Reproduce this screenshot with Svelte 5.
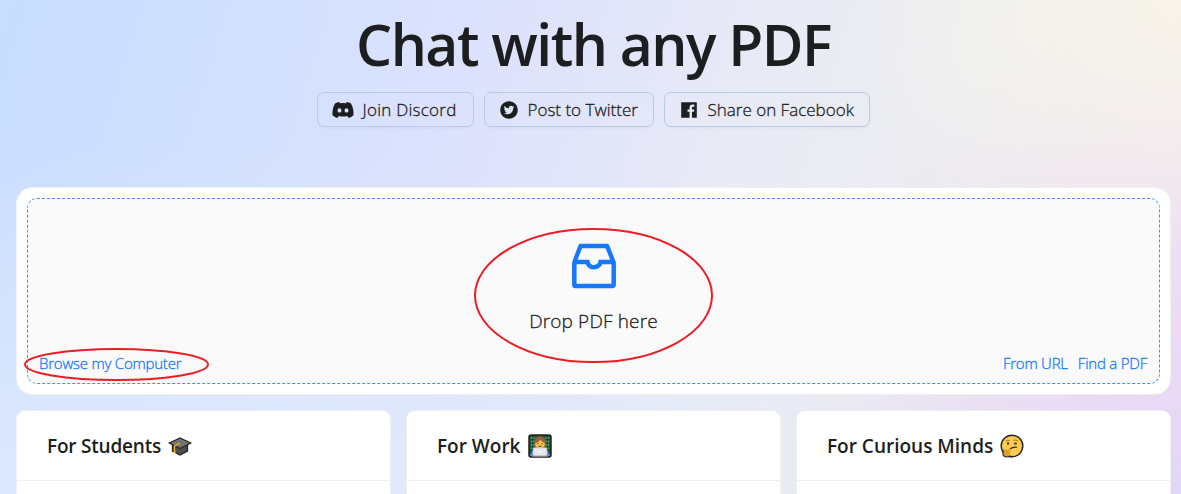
<script lang="ts">
	interface ShareLink {
		id: string;
		label: string;
		viewBox: string;
		path: string;
	}

	const shareLinks: ShareLink[] = [
		{
			id: 'discord',
			label: 'Join Discord',
			viewBox: '0 0 22 22',
			path: 'M7.2 3 8 4.2Q11 3.7 14 4.2L14.8 3Q17 3.2 19 4.6C21 8 21.8 12 21.5 16.2Q19.2 18.5 16.5 19L15.3 17Q11 18.2 6.7 17L5.5 19Q2.8 18.5.5 16.2C.2 12 1 8 3 4.6Q5 3.2 7.2 3ZM7.5 9.2a2 2.2 0 1 0 .01 4.4a2 2.2 0 0 0-.01-4.4ZM14.5 9.2a2 2.2 0 1 0 .01 4.4a2 2.2 0 0 0-.01-4.4Z'
		},
		{
			id: 'twitter',
			label: 'Post to Twitter',
			viewBox: '0 0 1024 1024',
			path: 'M512 64C264.6 64 64 264.6 64 512s200.6 448 448 448 448-200.6 448-448S759.4 64 512 64zm215.3 337.7c.3 4.7.3 9.6.3 14.4 0 146.8-111.8 315.9-316.1 315.9-63 0-121.4-18.3-170.6-49.8 9 1 17.6 1.4 26.8 1.4 52 0 99.8-17.6 137.9-47.4-48.8-1-89.8-33-103.8-77 17.1 2.5 32.5 2.5 50.1-2a111 111 0 01-88.9-109v-1.4c14.7 8.3 32 13.4 50.1 14.1a111.13 111.13 0 01-49.5-92.4c0-20.7 5.4-39.6 15.1-56a315.28 315.28 0 00229 116.1C492 353.1 548.4 292 616.2 292c32 0 60.8 13.4 81.1 35 25.1-4.7 49.1-14.1 70.5-26.7-8.3 25.7-25.7 47.4-48.8 61.1 22.4-2.4 44-8.6 64-17.3-15.1 22.2-34 41.9-55.7 57.6z'
		},
		{
			id: 'facebook',
			label: 'Share on Facebook',
			viewBox: '0 0 1024 1024',
			path: 'M880 112H144c-17.7 0-32 14.3-32 32v736c0 17.7 14.3 32 32 32h736c17.7 0 32-14.3 32-32V144c0-17.7-14.3-32-32-32zm-92.4 233.5h-63.9c-50.1 0-59.8 23.8-59.8 58.8v77.1h119.6l-15.6 120.7h-104V912H539.2V602.2H434.9V481.4h104.3v-89c0-103.3 63.1-159.6 155.3-159.6 44.2 0 82.1 3.3 93.2 4.8v107.9z'
		}
	];

	const audiences = [
		{ id: 'students', title: 'For Students' },
		{ id: 'work', title: 'For Work' },
		{ id: 'curious', title: 'For Curious Minds' }
	];
</script>

<div class="page">
	<h1>Chat with any PDF</h1>

	<div class="share-row">
		{#each shareLinks as link}
			<button class="share-btn {link.id}">
				<svg viewBox={link.viewBox} fill="currentColor" fill-rule="evenodd">
					<path d={link.path} />
				</svg>
				<span>{link.label}</span>
			</button>
		{/each}
	</div>

	<div class="upload-card">
		<div class="dropzone">
			<svg class="inbox" viewBox="0 0 1024 1024" fill="#1677ff">
				<path d="M885.2 446.3l-.2-.8-112.2-285.1c-5-16.1-19.9-27.2-36.8-27.2H281.2c-17 0-32.1 11.3-36.9 27.6L139.4 443l-.3.7-.2.8c-1.3 4.9-1.7 9.9-1 14.8-.1 1.6-.2 3.2-.2 4.8V830a60.9 60.9 0 0060.8 60.8h627.2c33.5 0 60.8-27.3 60.9-60.8V464.1c0-1.3 0-2.6-.1-3.7.4-4.9 0-9.6-1.3-14.1zm-295.8-43l-.3 15.7c-.8 44.9-31.8 75.1-77.1 75.1-22.1 0-41.1-7.1-54.8-20.6S436 441.2 435.6 419l-.3-15.7H229.5L309 210h399.2l81.7 193.3H589.4zm-375 76.8h157.3c24.3 57.1 76 90.8 140.4 90.8 33.7 0 65-9.4 90.3-27.2 22.2-15.6 39.5-37.4 50.7-63.6h156.5V814H214.4V480.1z" />
			</svg>
			<div class="drop-text"><span>Drop PDF here</span></div>
			<div class="links">
				<a href="#browse" class="browse">Browse my Computer</a>
				<div class="links-right">
					<a href="#url" class="url">From URL</a>
					<a href="#find" class="find">Find a PDF</a>
				</div>
			</div>
		</div>
	</div>

	<div class="cards">
		{#each audiences as item}
			<div class="card">
				<div class="card-head">
					<span class="card-title {item.id}">{item.title}</span>
					{#if item.id === 'students'}
						<svg class="emoji" viewBox="0 0 24 24">
							<path d="M4.5 11v6l7.500 4 7.500-4v-6" fill="#4d4e52" stroke="#242424" stroke-width="1.3" />
							<path d="M1 9 12 4 23 9l-11 5.500z" fill="#727272" stroke="#242424" stroke-width="1.3" stroke-linejoin="round" />
							<path d="M12 9 6.500 12v5" fill="none" stroke="#f2b51c" stroke-width="1.3" />
							<path d="M6.500 14.500 5.300 19h2.600z" fill="#f2b51c" />
						</svg>
					{:else if item.id === 'work'}
						<svg class="emoji" viewBox="0 0 24 24">
							<rect x="1" y="1" width="22" height="22" rx="2" fill="#1e4e32" stroke="#222" stroke-width="1.5" />
							<path d="M3.5 3v12M20.5 3v12M6 3v9M18 3v9" stroke="#58a46a" stroke-width="1.4" stroke-dasharray="2 1.5" />
							<path d="M2 22q.5-5 5-6h10q4.500 1 5 6z" fill="#4b8bdc" />
							<path d="M6.500 14V9Q6 2.200 12 2.200T17.500 9v5z" fill="#98623c" />
							<circle cx="12" cy="9.500" r="4.900" fill="#fbc64e" />
							<path d="M6.800 9.500Q6.500 3 12 3t5.200 6.500Q14.500 8.500 12.500 6 10.500 8.500 6.800 9.500z" fill="#98623c" />
							<path d="M10 9v1.300M14 9v1.300M10.500 12.300h3" stroke="#463020" />
							<rect x="5" y="13.800" width="14" height="8.700" rx="1" fill="#e5e7ec" stroke="#b7bac2" stroke-width=".6" />
							<circle cx="12" cy="18" r="1" fill="#fff" />
							<path d="M4 22.300h16" stroke="#777b88" stroke-width="1.200" />
						</svg>
					{:else}
						<svg class="emoji" viewBox="0 0 24 24">
							<circle cx="12" cy="12" r="10.800" fill="#fccb50" stroke="#242424" stroke-width="1.400" />
							<ellipse cx="8" cy="9.500" rx=".9" ry="1.400" fill="#3b2b20" />
							<ellipse cx="15.500" cy="9.500" rx="1.400" ry=".9" fill="#3b2b20" />
							<path d="M6 6.800q1.800-1 3.500-.3M13.600 6.500q2-1.500 4.500.5" fill="none" stroke="#a26d22" />
							<path d="M10 15q3-2.500 7-1.800" fill="none" stroke="#3b2b20" stroke-width="1.200" />
							<path d="M3.600 15.500Q5 14 6 16.200l4.500-1q1.500.4.2 1.600l-2 1 1.300.5q.5 4.700-4 4.700-3-.5-3-3z" fill="#e39c2b" />
							<path d="M3 16v5q1 2 4 2 3-.2 3.500-1" fill="none" stroke="#242424" stroke-width="1.100" />
						</svg>
					{/if}
				</div>
				<div class="card-body"></div>
			</div>
		{/each}
	</div>

	<svg class="marks" viewBox="0 0 1181 494" fill="none" stroke="#ed1c24" stroke-width="2">
		<ellipse cx="593.5" cy="295.500" rx="118.500" ry="66.500" />
		<ellipse cx="116.500" cy="364.500" rx="91.500" ry="15.500" />
	</svg>
</div>

<style>
	:global(body) {
		margin: 0;
		overflow: hidden;
	}

	.page {
		position: relative;
		box-sizing: border-box;
		height: 494px;
		padding: 7px 10px 0 16px;
		overflow: hidden;
		color: #1d1e20;
		font-family: 'Segoe UI', 'Open Sans', sans-serif;
		background:
			radial-gradient(ellipse 330px 250px at 100% 0%, #f8f4ea 0%, rgba(248, 244, 234, 0) 100%),
			radial-gradient(ellipse 420px 160px at 100% 100%, #e2d6f8 0%, rgba(226, 214, 248, 0) 100%),
			radial-gradient(ellipse 420px 340px at 100% 75%, #ecdaf4 0%, rgba(236, 218, 244, 0) 100%),
			radial-gradient(ellipse 900px 400px at 15% 110%, #e0ebfd 0%, rgba(224, 235, 253, 0) 100%),
			linear-gradient(107deg, #c8ddff 0%, #d0e0fe 18%, #dde2fd 38%, #e8eaf6 58%, #eeefef 78%, #f3e8ef 100%);
	}

	h1 {
		margin: 0;
		height: 74px;
		line-height: 74px;
		text-align: center;
		font-size: 57px;
		font-weight: 600;
		letter-spacing: -1.5px;
		white-space: nowrap;
	}

	.share-row {
		display: flex;
		justify-content: center;
		gap: 10px;
		margin-top: 11px;
		padding-right: 1px;
	}

	.share-btn {
		box-sizing: border-box;
		display: flex;
		align-items: center;
		height: 35px;
		padding: 0 14px;
		gap: 9px;
		border: 1px solid #b7cbe5;
		border-radius: 7px;
		background: transparent;
		box-shadow: 0 2px 0 rgba(0, 0, 0, 0.02);
		color: #1d1e20;
		font-family: inherit;
		font-size: 17px;
		font-weight: 300;
		-webkit-text-stroke: 0.3px currentColor;
		white-space: nowrap;
	}

	.share-btn svg {
		width: 20px;
		height: 20px;
		flex-shrink: 0;
	}

	.share-btn.discord {
		width: 157px;
		letter-spacing: 0.25px;
	}

	.share-btn.discord svg {
		width: 22px;
		height: 22px;
	}

	.share-btn.twitter {
		width: 170px;
	}

	.share-btn.facebook {
		width: 206px;
	}

	.upload-card {
		box-sizing: border-box;
		width: 1155px;
		height: 208px;
		margin-top: 60px;
		padding: 10px;
		border: 1px solid #f0f0f0;
		border-radius: 16px;
		background: #fff;
	}

	.dropzone {
		box-sizing: border-box;
		display: flex;
		flex-direction: column;
		align-items: center;
		height: 186px;
		padding-top: 37px;
		border: 1px dashed #3a93fa;
		border-radius: 10px;
		background: #fafafa;
	}

	.inbox {
		width: 60px;
		height: 60px;
		flex-shrink: 0;
	}

	.drop-text {
		height: 34px;
		margin-top: 8px;
		line-height: 34px;
		font-size: 19px;
		font-weight: 300;
		letter-spacing: 0.15px;
		-webkit-text-stroke: 0.3px currentColor;
	}

	.links {
		box-sizing: border-box;
		display: flex;
		justify-content: space-between;
		width: 100%;
		margin-top: 14px;
		padding: 0 12px 0 11px;
		line-height: 22px;
		font-size: 15px;
		font-weight: 300;
		letter-spacing: -0.22px;
		-webkit-text-stroke: 0.3px currentColor;
	}

	.links-right {
		display: flex;
		gap: 10px;
	}

	a {
		color: #1677ff;
		text-decoration: none;
	}

	.cards {
		display: grid;
		grid-template-columns: repeat(3, 1fr);
		gap: 15px;
		width: 1155px;
		margin-top: 15px;
	}

	.card {
		box-sizing: border-box;
		height: 120px;
		border: 1px solid #f0f0f0;
		border-radius: 9px;
		background: #fff;
	}

	.card-head {
		box-sizing: border-box;
		display: flex;
		align-items: center;
		gap: 7px;
		height: 70px;
		padding-left: 30px;
		border-bottom: 1px solid #f0f0f0;
	}

	.card-title {
		font-size: 19px;
		font-weight: 600;
		white-space: nowrap;
	}

	.card-title.students {
		letter-spacing: -0.2px;
	}

	.emoji {
		width: 24px;
		height: 24px;
	}

	.marks {
		position: absolute;
		inset: 0;
		width: 1181px;
		height: 494px;
		pointer-events: none;
	}
</style>
